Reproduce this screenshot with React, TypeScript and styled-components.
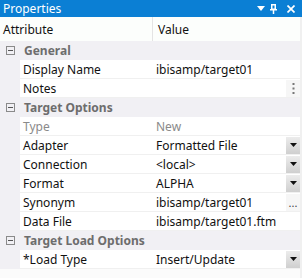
import React from "react";
import styled, { createGlobalStyle } from "styled-components";

const Global = createGlobalStyle`
  body {
    margin: 0;
    background: #f0f0f0;
    font-family: "Noto Sans", "Open Sans", sans-serif;
  }
`;

type Prop = {
  name: string;
  value: string;
  kind?: "drop" | "dots" | "more";
  muted?: boolean;
};

type Group = { title: string; props: Prop[] };

const groups: Group[] = [
  {
    title: "General",
    props: [
      { name: "Display Name", value: "ibisamp/target01" },
      { name: "Notes", value: "", kind: "dots" },
    ],
  },
  {
    title: "Target Options",
    props: [
      { name: "Type", value: "New", muted: true },
      { name: "Adapter", value: "Formatted File", kind: "drop" },
      { name: "Connection", value: "<local>", kind: "drop" },
      { name: "Format", value: "ALPHA", kind: "drop" },
      { name: "Synonym", value: "ibisamp/target01", kind: "more" },
      { name: "Data File", value: "ibisamp/target01.ftm" },
    ],
  },
  {
    title: "Target Load Options",
    props: [{ name: "*Load Type", value: "Insert/Update", kind: "drop" }],
  },
];

const Panel = styled.div`
  width: 302px;
  height: 278px;
  background: #f0f0f0;
  display: flex;
  flex-direction: column;
  overflow: hidden;
  font-size: 12px;
`;

const TitleBar = styled.div`
  height: 17px;
  background: #0b7fd4;
  color: #fff;
  display: flex;
  align-items: center;
  padding: 0 7px 0 3px;
`;

const Title = styled.span`
  flex: 1;
  line-height: 17px;
`;

const TitleIcons = styled.div`
  display: flex;
  align-items: center;
  gap: 5px;
  & > svg:last-child {
    margin-left: 5px;
  }
`;

const Grid = styled.div`
  display: grid;
  grid-template-columns: 20px 132px 148px;
  margin-right: 2px;
  background: #fff;
`;

const HeadCell = styled.div<{ $first?: boolean }>`
  height: 24px;
  display: flex;
  align-items: center;
  background: #fcfefc;
  color: #111;
  padding-left: ${(p) => (p.$first ? "3px" : "5px")};
  border-left: ${(p) => (p.$first ? "none" : "1px solid #e4e4e4")};
  grid-column: ${(p) => (p.$first ? "1 / span 2" : "3")};
`;

const GroupRow = styled.div`
  grid-column: 1 / -1;
  height: 19px;
  background: #f1f0f4;
  display: flex;
  align-items: center;
  color: #6d6d6d;
  font-weight: bold;
`;

const Toggle = styled.span`
  width: 7px;
  height: 7px;
  border: 1px solid #8a8a8a;
  margin: 0 9px 0 6px;
  position: relative;
  box-sizing: content-box;
  &::after {
    content: "";
    position: absolute;
    left: 1px;
    top: 3px;
    width: 5px;
    height: 1px;
    background: #555;
  }
`;

const Gutter = styled.div`
  height: 19px;
  background: #f1f0f4;
`;

const Cell = styled.div<{ $muted?: boolean; $value?: boolean }>`
  height: 18px;
  border-bottom: 1px solid #f0f0f0;
  background: #fff;
  display: flex;
  align-items: center;
  padding-left: ${(p) => (p.$value ? "4px" : "3px")};
  color: ${(p) => (p.$muted ? "#8a8a8a" : "#111")};
  white-space: nowrap;
`;

const CellText = styled.span`
  flex: 1;
`;

const DropButton = styled.div`
  width: 14px;
  height: 17px;
  background: linear-gradient(#ececec, #cfcfcf);
  display: flex;
  align-items: center;
  justify-content: center;
`;

const SideButton = styled.div`
  width: 14px;
  height: 17px;
  display: flex;
  align-items: center;
  justify-content: center;
  color: #444;
  font-size: 11px;
  background: #f6f6f6;
`;

const Filler = styled.div`
  flex: 1;
  margin-right: 2px;
  background: #fbfbfb;
`;

const Arrow = () => (
  <svg width="7" height="4" viewBox="0 0 7 4">
    <path d="M0 0h7L3.5 4z" fill="#111" />
  </svg>
);

const Dots = () => (
  <svg width="3" height="11" viewBox="0 0 3 11">
    <rect x="0.5" y="0" width="2" height="2" fill="#777" />
    <rect x="0.5" y="4.5" width="2" height="2" fill="#777" />
    <rect x="0.5" y="9" width="2" height="2" fill="#777" />
  </svg>
);

const PropRow = ({ p }: { p: Prop }) => (
  <>
    <Gutter />
    <Cell $muted={p.muted}>{p.name}</Cell>
    <Cell $muted={p.muted} $value>
      <CellText>{p.value}</CellText>
      {p.kind === "drop" && (
        <DropButton>
          <Arrow />
        </DropButton>
      )}
      {p.kind === "dots" && (
        <SideButton>
          <Dots />
        </SideButton>
      )}
      {p.kind === "more" && <SideButton>...</SideButton>}
    </Cell>
  </>
);

export default function App() {
  return (
    <Panel>
      <Global />
      <TitleBar>
        <Title>Properties</Title>
        <TitleIcons>
          <svg width="8" height="5" viewBox="0 0 8 5">
            <path d="M0 0h8L4 5z" fill="#fff" />
          </svg>
          <svg width="7" height="10" viewBox="0 0 7 10">
            <path d="M1.75 0.75h3.5v4.5h-3.5zM0 5.75h7M3.5 6v4" stroke="#fff" strokeWidth="1.5" fill="none" />
          </svg>
          <svg width="8" height="8" viewBox="0 0 8 8">
            <path d="M0.5 0.5l7 7M7.5 0.5l-7 7" stroke="#fff" strokeWidth="1.7" />
          </svg>
        </TitleIcons>
      </TitleBar>
      <Grid>
        <HeadCell $first>Attribute</HeadCell>
        <HeadCell>Value</HeadCell>
        {groups.map((g) => (
          <React.Fragment key={g.title}>
            <GroupRow>
              <Toggle />
              {g.title}
            </GroupRow>
            {g.props.map((p) => (
              <PropRow key={p.name} p={p} />
            ))}
          </React.Fragment>
        ))}
      </Grid>
      <Filler />
    </Panel>
  );
}
